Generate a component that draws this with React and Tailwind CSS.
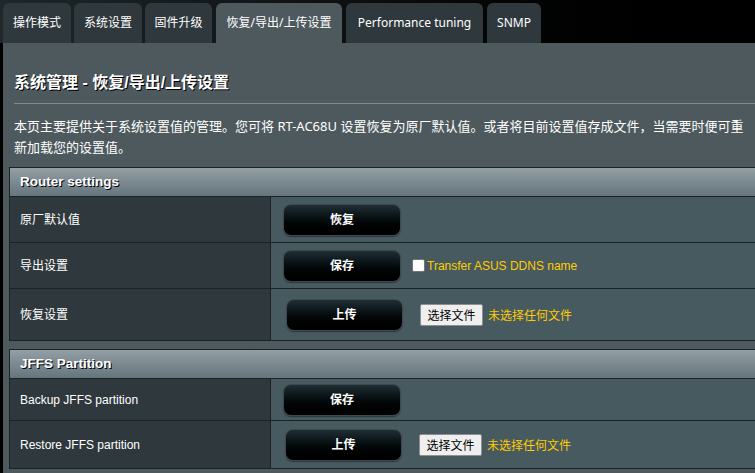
import React from "react";

const tabs = [
  { label: "操作模式", w: "w-[68px]", ml: "ml-[3px]" },
  { label: "系统设置", w: "w-[68px]", ml: "ml-[3px]" },
  { label: "固件升级", w: "w-[67px]", ml: "ml-[3px]" },
  { label: "恢复/导出/上传设置", w: "w-[126px]", ml: "ml-[4px]", active: true },
  { label: "Performance tuning", w: "w-[137px]", ml: "ml-[4px]" },
  { label: "SNMP", w: "w-[54px]", ml: "ml-[4px]" },
];

function GenButton({ children, wide }) {
  return (
    <div
      className={`${wide ? "w-[117px]" : "w-[118px]"} h-[32px] shrink-0 rounded-[8px] border border-[#3e494d] bg-gradient-to-b from-[#1f2f34] to-[#000000] flex items-center justify-center text-white font-bold text-[12px] shadow-[0_1px_1px_rgba(0,0,0,0.4)]`}
    >
      {children}
    </div>
  );
}

function FileInput() {
  return (
    <div className="flex items-center">
      <div className="w-[63px] h-[22px] bg-[#efefef] border border-[#8f8f8f] rounded-[2px] flex items-center justify-center text-black text-[12px] font-['Noto_Sans_CJK_SC',sans-serif]">
        选择文件
      </div>
      <span className="ml-[5px] text-[#ffcc00] text-[12px] font-['Noto_Sans_CJK_SC',sans-serif]">
        未选择任何文件
      </span>
    </div>
  );
}

function Row({ label, h, children, pl = "pl-[12px]" }) {
  return (
    <div className={`flex ${h} border-t border-[#1c2326]`}>
      <div className="w-[261px] shrink-0 bg-[#2f393d] border-r border-[#1c2326] flex items-center pl-[10px] text-white text-[12px]">
        {label}
      </div>
      <div className={`flex-1 bg-[#475a5f] flex items-center ${pl}`}>{children}</div>
    </div>
  );
}

function Header({ children }) {
  return (
    <div className="h-[28px] bg-gradient-to-b from-[#92a0a5] to-[#66757c] flex items-center pl-[10px] text-white font-bold text-[13.5px] [text-shadow:1px_1px_0_#000]">
      {children}
    </div>
  );
}

export default function App() {
  return (
    <div className="relative w-[755px] h-[473px] overflow-hidden bg-black font-['Liberation_Sans','Noto_Sans_CJK_SC',sans-serif]">
      <div className="flex h-[43px] pt-[3px] bg-gradient-to-r from-[#1f272a] via-[#0b0e0f] to-black">
        {tabs.map((t) => (
          <div
            key={t.label}
            className={`${t.w} ${t.ml} h-[40px] shrink-0 rounded-t-[6px] flex items-center justify-center text-white text-[12px] font-['Noto_Sans','Noto_Sans_CJK_SC',sans-serif] ${
              t.active ? "bg-[#4d595d]" : "bg-[#2f393d]"
            }`}
          >
            {t.label}
          </div>
        ))}
      </div>
      <div className="ml-[3px] h-[430px] bg-[#4d595d]">
        <div className="pt-[30px] pl-[11px] h-[60px] leading-[20px] text-white font-bold text-[16px] [text-shadow:1px_1px_0_#000]">
          系统管理 - 恢复/导出/上传设置
        </div>
        <div className="ml-[11px] border-t border-[#7f8b8f]" />
        <div className="mt-[12px] pl-[11px] text-white text-[13px] leading-[21px] font-['Noto_Sans','Noto_Sans_CJK_SC',sans-serif]">
          <div className="whitespace-nowrap">
            本页主要提供关于系统设置值的管理。您可将 RT-AC68U 设置恢复为原厂默认值。或者将目前设置值存成文件，当需要时便可重
          </div>
          <div className="whitespace-nowrap">新加载您的设置值。</div>
        </div>

        <div className="mt-[9px] ml-[6px] w-[760px] border border-[#1c2326]">
          <Header>Router settings</Header>
          <Row label="原厂默认值" h="h-[46px]">
            <GenButton>恢复</GenButton>
          </Row>
          <Row label="导出设置" h="h-[46px]">
            <GenButton>保存</GenButton>
            <div className="ml-[11px] w-[13px] h-[13px] bg-white border border-[#767676] rounded-[2px]" />
            <span className="ml-[2px] text-[#ffcc00] text-[12px]">Transfer ASUS DDNS name</span>
          </Row>
          <Row label="恢复设置" h="h-[52px]" pl="pl-[15px]">
            <GenButton wide>上传</GenButton>
            <div className="ml-[17px]">
              <FileInput />
            </div>
          </Row>
        </div>

        <div className="mt-[8px] ml-[6px] w-[760px] border border-[#1c2326]">
          <Header>JFFS Partition</Header>
          <Row label="Backup JFFS partition" h="h-[42px]">
            <GenButton>保存</GenButton>
          </Row>
          <Row label="Restore JFFS partition" h="h-[48px]" pl="pl-[14px]">
            <GenButton wide>上传</GenButton>
            <div className="ml-[17px]">
              <FileInput />
            </div>
          </Row>
        </div>
      </div>
    </div>
  );
}
